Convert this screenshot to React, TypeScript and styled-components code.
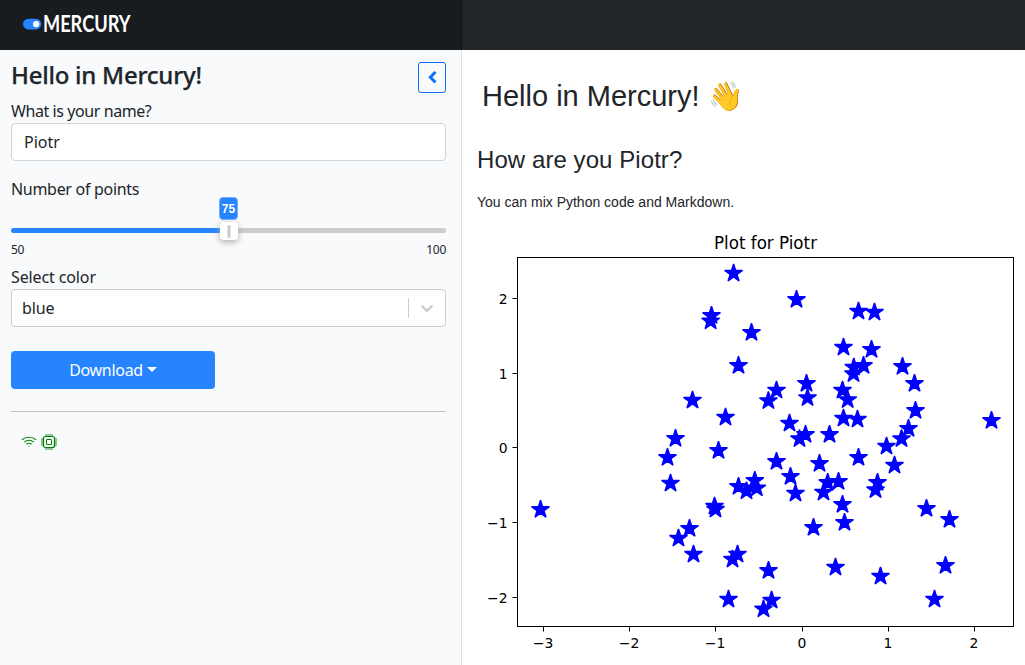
import React from 'react';
import styled, { createGlobalStyle } from 'styled-components';

const GlobalStyle = createGlobalStyle`
  *, *::before, *::after { box-sizing: border-box; }
  body {
    margin: 0;
    background: #fff;
    color: #212529;
    font-family: "Noto Sans", sans-serif;
    font-size: 16px;
    line-height: 24px;
  }
`;

const Page = styled.div`
  height: 665px;
  display: flex;
  flex-direction: column;
  overflow: hidden;
`;

const Navbar = styled.header`
  height: 50px;
  flex: none;
  display: flex;
  background: #212529;
`;

const Brand = styled.div`
  width: 462px;
  padding: 8px 0 0 22px;
  background: #191c1f;
  box-shadow: inset -1px 0 0 rgba(0, 0, 0, 0.25);
`;

const LogoMark = styled.svg`
  display: block;
  overflow: visible;
`;

const Body = styled.div`
  flex: 1;
  display: flex;
  min-height: 0;
`;

const Sidebar = styled.aside`
  width: 462px;
  flex: none;
  padding: 12px 16px 0 11px;
  background: #f8fafc;
  box-shadow: inset -1px 0 0 rgba(0, 0, 0, 0.1);
`;

const TitleRow = styled.div`
  display: flex;
  justify-content: space-between;
  height: 37px;
`;

const Title = styled.h4`
  margin: 0;
  font-size: 24px;
  font-weight: 500;
  line-height: 25px;
  letter-spacing: -0.25px;
  -webkit-text-stroke: 0.25px #212529;
`;

const CollapseButton = styled.button`
  width: 28px;
  height: 31px;
  padding: 0;
  border: 1px solid #0d6efd;
  border-radius: 3px;
  background: transparent;
  display: flex;
  align-items: center;
  justify-content: center;
`;

const Label = styled.label<{ $spacing?: number }>`
  display: block;
  height: 24px;
  letter-spacing: ${(p) => p.$spacing ?? -0.3}px;
`;

const Field = styled.div<{ $border: string; $indent: number }>`
  height: 38px;
  display: flex;
  align-items: center;
  padding-left: ${(p) => p.$indent}px;
  border: 1px solid ${(p) => p.$border};
  border-radius: 4px;
  background: #fff;
`;

const FieldText = styled.span<{ $spacing?: number }>`
  flex: 1;
  letter-spacing: ${(p) => p.$spacing ?? 0}px;
`;

const Separator = styled.span`
  width: 1px;
  height: 20px;
  background: #ccc;
`;

const Indicator = styled.span`
  width: 36px;
  display: flex;
  justify-content: center;
`;

const SliderBlock = styled.div`
  padding-top: 16px;
  height: 104px;
`;

const Track = styled.div`
  position: relative;
  height: 5px;
  margin-top: 27px;
  border-radius: 4px;
  background: linear-gradient(to right, #2684ff 50%, #ccc 50%);
`;

const Thumb = styled.div`
  position: absolute;
  left: 209px;
  top: -6px;
  width: 18px;
  height: 18px;
  border-radius: 4px;
  background: #fff;
  box-shadow: 0 2px 6px #aaa;
  display: flex;
  align-items: center;
  justify-content: center;
`;

const Grip = styled.span`
  width: 4px;
  height: 13px;
  background: #ccc;
  border: 1px solid #e0e0e0;
`;

const ValueBubble = styled.div`
  position: absolute;
  left: 208px;
  top: -31px;
  width: 19px;
  height: 23px;
  border-radius: 4px;
  border: 1px solid #6dacff;
  background: #2684ff;
  color: #fff;
  font: bold 12px/23px "Liberation Sans", sans-serif;
  text-align: center;
  display: flex;
  justify-content: center;
`;

const Range = styled.div`
  display: flex;
  justify-content: space-between;
  margin-top: 8px;
  font-size: 12px;
  line-height: 18px;
  letter-spacing: -0.25px;
`;

const DownloadButton = styled.button`
  width: 204px;
  height: 38px;
  margin-top: 24px;
  padding: 0;
  border: 0;
  border-radius: 4px;
  background: #2684ff;
  color: #fff;
  font: 16px/24px "Noto Sans", sans-serif;
  letter-spacing: -0.3px;
  display: flex;
  align-items: center;
  justify-content: center;
  gap: 4px;
`;

const Caret = styled.span`
  margin-top: -2px;
  border-top: 5px solid #fff;
  border-left: 5px solid transparent;
  border-right: 5px solid transparent;
`;

const Divider = styled.hr`
  margin: 22px 0 0;
  height: 1px;
  border: 0;
  background: #c2c4c6;
`;

const StatusIcons = styled.div`
  display: flex;
  gap: 4px;
  padding: 22px 0 0 10px;
`;

const Notebook = styled.main`
  flex: 1;
  padding: 24px 0 0 15px;
  font-family: "Liberation Sans", sans-serif;
`;

const Heading = styled.h1`
  margin: 0;
  padding-left: 5px;
  height: 44px;
  display: flex;
  align-items: center;
  font-size: 29px;
  font-weight: 400;
  line-height: 44px;
`;

const Wave = styled.span`
  margin-left: 8px;
  font-size: 28.5px;
`;

const SubHeading = styled.h2`
  margin: 27px 0 0;
  font-size: 24px;
  font-weight: 400;
  line-height: 30px;
  letter-spacing: 0.07px;
`;

const Paragraph = styled.p`
  margin: 17px 0 0;
  font-size: 14px;
  line-height: 20px;
`;

const Plot = styled.svg`
  display: block;
  margin-top: 18px;
  font-family: "DejaVu Sans", sans-serif;
`;

const PLOT_X = 477;
const PLOT_Y = 230;

// Upper tip of every star marker, in window pixels.
const points: [number, number][] = [
  [733.4, 263], [796.3, 289.3], [711.3, 305.3], [710.4, 310.8], [751.3, 322.3],
  [738.3, 355.3], [806.3, 373.3], [776.3, 380], [768.2, 390.4], [692.3, 390],
  [807.3, 387.4], [725.3, 407], [789.3, 413], [805.3, 424.3], [675.3, 428.3],
  [829.3, 424.3], [799.3, 428.4], [858.3, 301], [874.3, 302], [843.3, 337],
  [871.3, 339.3], [853.6, 357], [863.3, 355.3], [853.3, 363.4], [902.3, 356.3],
  [914.3, 373.3], [842.3, 380], [847.5, 389.4], [915.3, 400.3], [843.3, 408],
  [857.3, 409], [908.3, 418.3], [991.3, 410.3], [901.3, 428.4], [886.3, 436],
  [858.3, 447.3], [894.3, 455], [877.3, 472.3], [875.3, 479.4], [926.3, 498.3],
  [949.3, 509.3], [945.3, 555.3], [880.3, 566], [934.3, 589], [842.3, 494.3],
  [844.3, 512.3], [838.3, 471.3], [827.5, 472.3], [823.3, 482], [835.3, 557],
  [813.3, 517.3], [819.3, 453.3], [776.3, 451.3], [790.3, 466.3], [795.3, 482.9],
  [754.6, 470.3], [738.3, 476.3], [746.3, 480.7], [756.6, 477.7], [714.3, 496],
  [715.3, 499], [689.3, 518.3], [678.3, 528], [693.3, 544], [737.3, 544],
  [732.3, 549], [768.3, 560.3], [728.3, 589], [771.4, 590], [763.3, 598.7],
  [718.3, 440.3], [670.3, 473], [667.3, 447.3], [540.3, 499.3],
];

const STAR_RADIUS = 9.4;
const starShape = Array.from({ length: 10 }, (_, i) => {
  const r = i % 2 === 0 ? STAR_RADIUS : STAR_RADIUS * 0.382;
  const a = (i * Math.PI) / 5;
  return `${(r * Math.sin(a)).toFixed(2)},${(-r * Math.cos(a)).toFixed(2)}`;
}).join(' ');

const xTicks: [number, string][] = [
  [543.5, '−3'], [629.5, '−2'], [715.5, '−1'], [802.5, '0'], [888.5, '1'], [974.5, '2'],
];
const yTicks: [number, string][] = [
  [298.5, '2'], [373.5, '1'], [447.5, '0'], [522.5, '−1'], [597.5, '−2'],
];

const Logo = () => (
  <LogoMark width="116" height="34" viewBox="22 8 116 34">
    <rect x="23" y="18.8" width="18.2" height="10.6" rx="5.3" fill="#2684ff" />
    <circle cx="36.2" cy="24.1" r="3.2" fill="#fff" />
    <text
      x="43"
      y="32.3"
      fill="#fff"
      fontFamily="Lato, sans-serif"
      fontWeight="700"
      fontSize="22"
      textLength="87.5"
      lengthAdjust="spacingAndGlyphs"
    >
      MERCURY
    </text>
  </LogoMark>
);

const ScatterPlot = () => (
  <Plot width="548" height="435" viewBox={`${PLOT_X} ${PLOT_Y} 548 435`}>
    <text x="765.5" y="248.5" fontSize="17.5" textAnchor="middle" textLength="103" lengthAdjust="spacingAndGlyphs">
      Plot for Piotr
    </text>
    {points.map(([x, tip], i) => (
      <polygon
        key={i}
        points={starShape}
        transform={`translate(${x + 0.2} ${tip + 10.4})`}
        fill="#00f"
        stroke="#00f"
        strokeWidth="1.39"
        strokeLinejoin="bevel"
      />
    ))}
    <rect x="517.5" y="257.5" width="496" height="369" fill="none" stroke="#000" />
    {xTicks.map(([x, label]) => (
      <g key={label}>
        <path d={`M${x} 627v4.5`} stroke="#000" />
        <text x={x - 0.5} y="648" fontSize="13.9" textAnchor="middle">{label}</text>
      </g>
    ))}
    {yTicks.map(([y, label]) => (
      <g key={label}>
        <path d={`M517 ${y}h-4.5`} stroke="#000" />
        <text x="507.5" y={y + 5.5} fontSize="13.9" textAnchor="end">{label}</text>
      </g>
    ))}
  </Plot>
);

export default function App() {
  return (
    <Page>
      <GlobalStyle />
      <Navbar>
        <Brand><Logo /></Brand>
      </Navbar>
      <Body>
        <Sidebar>
          <TitleRow>
            <Title>Hello in Mercury!</Title>
            <CollapseButton aria-label="Collapse">
              <svg width="10" height="14" viewBox="0 0 10 14">
                <path d="M8.500 1 3.300 6.200l5.200 5.200" fill="none" stroke="#0d6efd" strokeWidth="2.900" />
              </svg>
            </CollapseButton>
          </TitleRow>
          <Label $spacing={-0.42}>What is your name?</Label>
          <Field $border="#ced4da" $indent={12}><FieldText>Piotr</FieldText></Field>
          <SliderBlock>
            <Label>Number of points</Label>
            <Track>
              <ValueBubble>75</ValueBubble>
              <Thumb><Grip /></Thumb>
            </Track>
            <Range><span>50</span><span>100</span></Range>
          </SliderBlock>
          <Label $spacing={-0.12}>Select color</Label>
          <Field $border="#ccc" $indent={10}>
            <FieldText $spacing={-0.1}>blue</FieldText>
            <Separator />
            <Indicator>
              <svg width="20" height="20" viewBox="0 0 20 20" fill="#ccc">
                <path d="M4.516 7.548c0.436-0.446 1.043-0.481 1.576 0l3.908 3.747 3.908-3.747c0.533-0.481 1.141-0.446 1.574 0 0.436 0.445 0.408 1.197 0 1.615-0.406 0.418-4.695 4.502-4.695 4.502-0.217 0.223-0.502 0.335-0.787 0.335s-0.57-0.112-0.789-0.335c0 0-4.287-4.084-4.695-4.502s-0.436-1.17 0-1.615z" />
              </svg>
            </Indicator>
          </Field>
          <DownloadButton>Download<Caret /></DownloadButton>
          <Divider />
          <StatusIcons>
            <svg width="16" height="16" viewBox="0 0 16 16" fill="none" stroke="#008000">
              <path d="M.9 5.700C5 2.400 11 2.400 15.100 5.700M3.100 8.100c3-2.300 6.800-2.300 9.800 0M5.400 10.200c1.600-1.200 3.600-1.200 5.200 0" strokeWidth="1.100" />
              <path d="M7 11.700h2l-1 1.100z" fill="#008000" stroke="none" />
            </svg>
            <svg width="16" height="16" viewBox="0 0 16 16" fill="none" stroke="#008000">
              <path d="M4 1h8M4 15h8M1 4v8M15 4v8" strokeWidth="2" strokeOpacity=".42" />
              <rect x="2.500" y="2.500" width="11" height="11" rx="2" fill="#f8fafc" strokeWidth="1.200" />
              <rect x="5.500" y="5.500" width="5" height="5" rx=".5" />
            </svg>
          </StatusIcons>
        </Sidebar>
        <Notebook>
          <Heading>Hello in Mercury!<Wave>👋</Wave></Heading>
          <SubHeading>How are you Piotr?</SubHeading>
          <Paragraph>You can mix Python code and Markdown.</Paragraph>
          <ScatterPlot />
        </Notebook>
      </Body>
    </Page>
  );
}
